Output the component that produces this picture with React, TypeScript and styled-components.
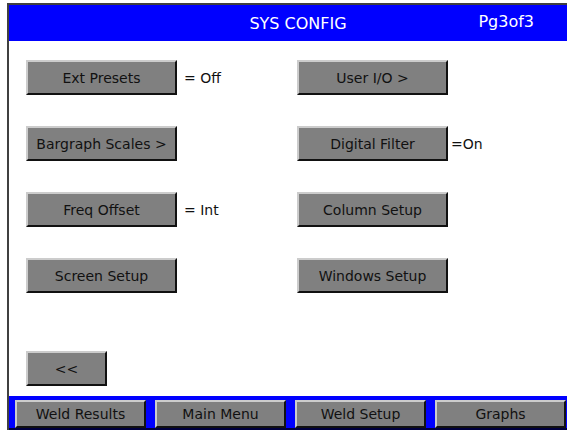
import React from 'react';
import styled, { createGlobalStyle } from 'styled-components';

const GlobalStyle = createGlobalStyle`
  html, body {
    margin: 0;
    padding: 0;
    background: #ffffff;
  }
  body {
    font-family: "DejaVu Sans", Verdana, sans-serif;
  }
`;

type Item = { label: string; value?: string; tight?: boolean };

const leftItems: Item[] = [
    { label: 'Ext Presets', value: '= Off' },
    { label: 'Bargraph Scales >' },
    { label: 'Freq Offset', value: '= Int' },
    { label: 'Screen Setup' },
];

const rightItems: Item[] = [
    { label: 'User I/O >' },
    { label: 'Digital Filter', value: '=On', tight: true },
    { label: 'Column Setup' },
    { label: 'Windows Setup' },
];

const footerItems = ['Weld Results', 'Main Menu', 'Weld Setup', 'Graphs'];

const App = () => {
    const rows = leftItems.map((left, i) => [left, rightItems[i]]);

    return (
        <>
            <GlobalStyle />
            <Frame>
                <Header>
                    <Title>SYS CONFIG</Title>
                    <Page>Pg3of3</Page>
                </Header>
                <Content>
                    <Grid>
                        {rows.map((pair) =>
                            pair.map((item) => (
                                <Cell key={item.label}>
                                    <Button>{item.label}</Button>
                                    {item.value && <Value tight={item.tight}>{item.value}</Value>}
                                </Cell>
                            ))
                        )}
                    </Grid>
                    <BackButton>&lt;&lt;</BackButton>
                </Content>
                <Footer>
                    {footerItems.map((f) => (
                        <FooterButton key={f}>{f}</FooterButton>
                    ))}
                </Footer>
            </Frame>
        </>
    );
};

export default App;

const Frame = styled.div`
  margin: 3px 0 0 7px;
  width: 560px;
  height: 427px;
  box-sizing: border-box;
  border-left: 2px solid #404040;
  border-top: 2px solid #404040;
  display: flex;
  flex-direction: column;
`;

const Header = styled.div`
  height: 36px;
  background: #0000ff;
  color: #ffffff;
  display: flex;
  align-items: center;
  position: relative;
  font-size: 16px;
`;

const Title = styled.div`
  flex: 1;
  text-align: center;
  padding-left: 20px;
`;

const Page = styled.div`
  position: absolute;
  right: 33px;
  top: 7px;
`;

const Content = styled.div`
  flex: 1;
  display: flex;
  flex-direction: column;
  padding: 19px 0 10px 17px;
`;

const Grid = styled.div`
  display: grid;
  grid-template-columns: 271px auto;
  row-gap: 31px;
`;

const Cell = styled.div`
  display: flex;
  align-items: center;
`;

const Bevel = styled.button`
  box-sizing: border-box;
  background: #808080;
  color: #111111;
  font-family: "DejaVu Sans", Verdana, sans-serif;
  font-size: 14px;
  padding: 0;
  border-style: solid;
  border-width: 2px;
  border-color: #cccccc #111111 #111111 #cccccc;
  border-radius: 0;
  display: flex;
  align-items: center;
  justify-content: center;
`;

const Button = styled(Bevel)`
  width: 151px;
  height: 35px;
`;

const Value = styled.span<{ tight?: boolean }>`
  margin-left: ${(p) => (p.tight ? '3px' : '7px')};
  font-size: 14px;
  color: #111111;
`;

const BackButton = styled(Bevel)`
  margin-top: auto;
  width: 81px;
  height: 35px;
`;

const Footer = styled.div`
  background: #0000ff;
  height: 34px;
  box-sizing: border-box;
  padding: 4px 0 0 6px;
  border-bottom: 2px solid #000040;
  display: grid;
  grid-template-columns: repeat(4, 130px);
  column-gap: 10px;
`;

const FooterButton = styled(Bevel)`
  height: 28px;
  width: 131px;
`;
